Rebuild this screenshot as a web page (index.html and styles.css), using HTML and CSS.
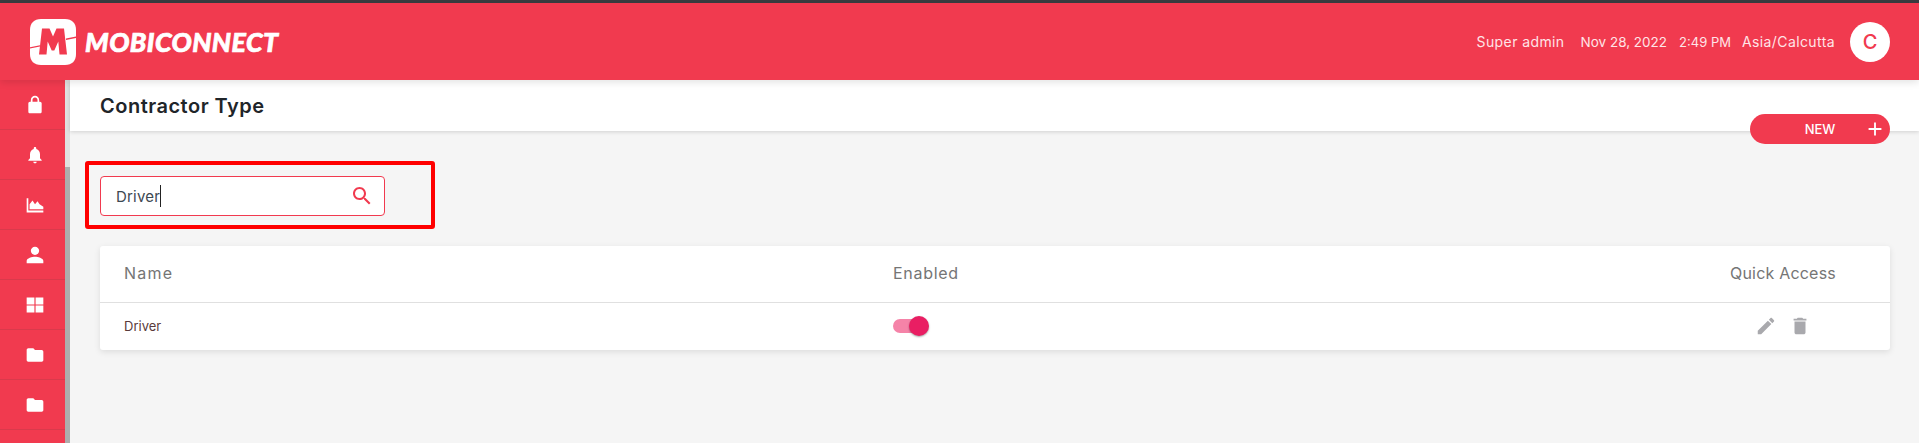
FILE: index.html
```html
<!DOCTYPE html>
<html lang="en">
<head>
    <meta charset="UTF-8">
    <title>Contractor Type</title>
    <link rel="stylesheet" href="styles.css">
</head>
<body>
    <div class="topline"></div>
    <div class="header">
        <div class="logo">
            <svg class="logo-mark" viewBox="0 0 46 46">
                <path fill="#fff" d="M11 0h24c7 0 11 4 11 11v24c0 7-4 11-11 11H11C4 46 0 42 0 35V11C0 4 4 0 11 0z"/>
                <path fill="#f13a4f" d="M9 35.500l3-26h7.500l3.500 8 3.500-8H34l3 26h-7.500l-1.200-13-4 9h-2.600l-4-9-1.200 13z"/>
                <path fill="#f13a4f" d="M0 28.200l10-2v1.400l-10 2zM36 19.600l10-2v1.400l-10 2z"/>
            </svg>
            <span class="logo-text">MOBICONNECT</span>
        </div>
        <div class="user-info">
            <span class="user-name">Super admin</span>
            <span class="user-date">Nov 28, 2022</span>
            <span class="user-time">2:49 PM</span>
            <span class="user-zone">Asia/Calcutta</span>
            <div class="avatar">C</div>
        </div>
    </div>
    <div class="page">
        <div class="sidebar">
            <div class="side-item"><svg viewBox="0 0 24 24"><path d="M18 8h-1V6c0-2.760-2.240-5-5-5S7 3.240 7 6v2H6c-1.100 0-2 .9-2 2v10c0 1.100.9 2 2 2h12c1.100 0 2-.9 2-2V10c0-1.100-.9-2-2-2zM9 8V6c0-1.660 1.340-3 3-3s3 1.340 3 3v2z"/></svg></div>
            <div class="side-item"><svg viewBox="0 0 24 24"><path d="M12 22c1.100 0 2-.9 2-2h-4c0 1.100.9 2 2 2zm6-6v-5c0-3.070-1.630-5.640-4.500-6.320V4c0-.83-.67-1.500-1.500-1.500s-1.500.67-1.500 1.500v.68C7.640 5.360 6 7.920 6 11v5l-2 2v1h16v-1z"/></svg></div>
            <div class="side-item"><svg viewBox="0 0 24 24"><path d="M2 4h2v14.500h18V21H2z"/><path d="M5.500 17v-6l3.500-4.500 3 4.500 3-3.500 2.500 3.500 4.500 3v3z"/></svg></div>
            <div class="side-item"><svg viewBox="0 0 24 24"><path d="M12 12c2.760 0 5-2.240 5-5s-2.240-5-5-5-5 2.240-5 5 2.240 5 5 5zm0 2c-3.340 0-10 1.670-10 5v3h20v-3c0-3.330-6.660-5-10-5z"/></svg></div>
            <div class="side-item"><svg viewBox="0 0 24 24"><path d="M2 3h9.300v8.300H2zM12.700 3H22v8.300h-9.300zM2 12.700h9.300V21H2zM12.700 12.700H22V21h-9.300z"/></svg></div>
            <div class="side-item"><svg viewBox="0 0 24 24"><path d="M10 4H4c-1.100 0-2 .9-2 2v12c0 1.100.9 2 2 2h16c1.100 0 2-.9 2-2V8c0-1.100-.9-2-2-2h-8z"/></svg></div>
            <div class="side-item"><svg viewBox="0 0 24 24"><path d="M10 4H4c-1.100 0-2 .9-2 2v12c0 1.100.9 2 2 2h16c1.100 0 2-.9 2-2V8c0-1.100-.9-2-2-2h-8z"/></svg></div>
        </div>
        <div class="scrollbar"><div class="scroll-thumb"></div></div>
        <div class="main">
            <div class="title-bar"><h1>Contractor Type</h1></div>
            <button class="new-btn"><span>NEW</span><svg viewBox="0 0 24 24"><path d="M19 13h-6v6h-2v-6H5v-2h6V5h2v6h6z"/></svg></button>
            <div class="highlight">
                <div class="search">
                    <span class="search-text">Driver</span><span class="caret"></span>
                    <svg viewBox="0 0 24 24"><path d="M15.500 14h-.79l-.28-.27C15.410 12.590 16 11.110 16 9.500 16 5.910 13.090 3 9.500 3S3 5.910 3 9.500 5.910 16 9.500 16c1.610 0 3.090-.59 4.230-1.570l.27.28v.79l5 4.990L20.490 19zm-6 0C7.010 14 5 11.990 5 9.500S7.010 5 9.500 5 14 7.010 14 9.500 11.990 14 9.500 14z"/></svg>
                </div>
            </div>
            <div class="table">
                <div class="row head">
                    <div class="col-name">Name</div>
                    <div class="col-enabled">Enabled</div>
                    <div class="col-quick">Quick Access</div>
                </div>
                <div class="row body">
                    <div class="col-name">Driver</div>
                    <div class="col-enabled"><div class="toggle"><div class="knob"></div></div></div>
                    <div class="col-quick icons">
                        <svg viewBox="0 0 24 24"><path d="M3 17.250V21h3.750L17.810 9.940l-3.750-3.750zM20.710 7.040c.39-.39.39-1.020 0-1.410l-2.340-2.340c-.39-.39-1.020-.39-1.410 0l-1.830 1.830 3.750 3.750z"/></svg>
                        <svg viewBox="0 0 24 24"><path d="M6 19c0 1.100.9 2 2 2h8c1.100 0 2-.9 2-2V7H6zM19 4h-3.500l-1-1h-5l-1 1H5v2h14z"/></svg>
                    </div>
                </div>
            </div>
        </div>
    </div>
</body>
</html>
```

FILE: styles.css
```css
* {
    box-sizing: border-box;
}
html, body {
    height: 100%;
}
body {
    margin: 0;
    font-family: Inter, "Open Sans", sans-serif;
    background-color: #f5f5f5;
    overflow: hidden;
    color: #333;
}
.topline {
    height: 3px;
    background-color: #3a3c40;
}
.header {
    height: 77px;
    background-color: #f13a4f;
    color: white;
    display: flex;
    justify-content: space-between;
    align-items: center;
    padding: 0 29px 0 30px;
    position: relative;
    z-index: 2;
    box-shadow: 0 2px 8px rgba(0, 0, 0, 0.12);
}
.logo {
    display: flex;
    align-items: center;
    gap: 9px;
}
.logo-mark {
    width: 46px;
    height: 46px;
    display: block;
}
.logo-text {
    font-family: Lato, sans-serif;
    font-weight: 900;
    font-style: italic;
    font-size: 26.800px;
    letter-spacing: 0.4px;
    -webkit-text-stroke: 0.7px white;
}
.user-info {
    display: flex;
    align-items: center;
    font-size: 14px;
    letter-spacing: 0.4px;
    color: #ffe4e7;
}
.user-name {
    margin-right: 16px;
}
.user-date {
    margin-right: 12px;
    font-size: 13.500px;
    letter-spacing: 0;
}
.user-time {
    margin-right: 11px;
    font-size: 13px;
    letter-spacing: 0;
}
.user-zone {
    margin-right: 15px;
}
.avatar {
    width: 40px;
    height: 40px;
    border-radius: 50%;
    background-color: white;
    color: #f13a4f;
    display: flex;
    justify-content: center;
    align-items: center;
    font-size: 20px;
    font-weight: 500;
    letter-spacing: 0;
}
.page {
    display: flex;
    height: 363px;
    overflow: hidden;
}
.sidebar {
    width: 65px;
    flex-shrink: 0;
    background-color: #f13a4f;
}
.side-item {
    height: 50px;
    display: flex;
    justify-content: center;
    align-items: center;
    padding-left: 5px;
    border-bottom: 1px solid #d93a4c;
}
.side-item svg {
    width: 20px;
    height: 20px;
    fill: white;
}
.scrollbar {
    width: 5px;
    flex-shrink: 0;
    background-color: #e0e0e0;
    padding-top: 87px;
}
.scroll-thumb {
    height: 100%;
    background-color: #adadad;
}
.main {
    flex: 1;
    position: relative;
}
.title-bar {
    height: 51px;
    background-color: white;
    padding-left: 30px;
    display: flex;
    align-items: center;
    box-shadow: 0 1px 4px rgba(0, 0, 0, 0.15);
}
.title-bar h1 {
    margin: 0;
    font-size: 20px;
    font-weight: 600;
    letter-spacing: 0.5px;
    color: #1f2529;
}
.new-btn {
    position: absolute;
    top: 34px;
    right: 29px;
    width: 140px;
    height: 30px;
    border: none;
    border-radius: 15px;
    background-color: #f13a4f;
    color: white;
    font-family: inherit;
    font-size: 13px;
    font-weight: 500;
    padding: 0;
}
.new-btn svg {
    position: absolute;
    right: 4px;
    top: 4px;
    width: 22px;
    height: 22px;
    fill: white;
}
.highlight {
    width: 350px;
    height: 68px;
    margin: 30px 0 17px 15px;
    border: 4px solid #ff0000;
    border-radius: 3px;
    padding: 11px;
}
.search {
    width: 285px;
    height: 40px;
    background-color: white;
    border: 1px solid #f13a4f;
    border-radius: 4px;
    display: flex;
    align-items: center;
    padding: 0 10px 0 15px;
    font-size: 15px;
    letter-spacing: 0.2px;
}
.search-text {
    color: #3d4852;
}
.caret {
    width: 1px;
    height: 22px;
    background-color: #222;
}
.search svg {
    width: 24px;
    height: 24px;
    fill: #f13a4f;
    margin-left: auto;
}
.table {
    margin: 0 29px 0 30px;
    background-color: white;
    border-radius: 3px;
    box-shadow: 0 2px 6px rgba(0, 0, 0, 0.1);
}
.row {
    display: flex;
    align-items: center;
    padding-left: 24px;
}
.row.head {
    height: 57px;
    padding-bottom: 2px;
    border-bottom: 1px solid #e0e0e0;
    font-size: 16px;
    letter-spacing: 0.7px;
    color: #757575;
}
.row.head .col-name {
    letter-spacing: 1.200px;
}
.row.head .col-quick {
    letter-spacing: 0.2px;
}
.row.body {
    height: 47px;
    padding-bottom: 2px;
    font-size: 13px;
    color: #5a3a3a;
}
.col-name {
    width: 769px;
}
.col-enabled {
    flex: 1;
}
.col-quick {
    width: 160px;
}
.toggle {
    width: 32px;
    height: 14px;
    border-radius: 7px;
    background-color: #f583a8;
    position: relative;
}
.knob {
    position: absolute;
    right: -4px;
    top: -3px;
    width: 20px;
    height: 20px;
    border-radius: 50%;
    background-color: #e91e63;
    box-shadow: 0 1px 2px rgba(0, 0, 0, 0.35);
}
.icons {
    display: flex;
    gap: 12px;
    padding-left: 25px;
}
.icons svg {
    width: 22px;
    height: 22px;
    fill: #a9a9ad;
}
```
